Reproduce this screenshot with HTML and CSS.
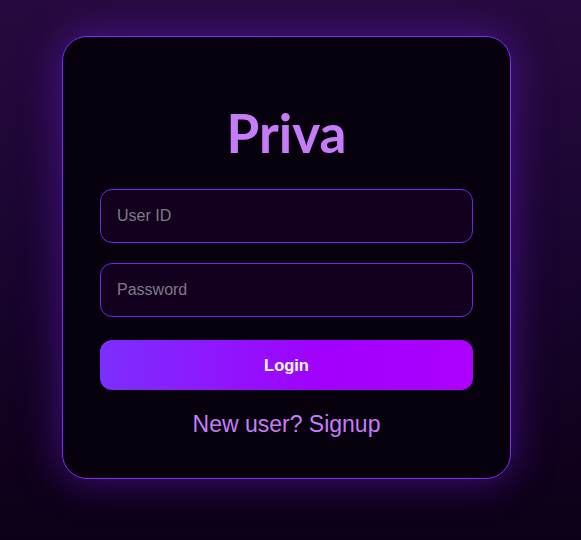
FILE: index.html
```html
<!DOCTYPE html>
<html lang="en">
<head>
<meta charset="utf-8">
<title>Priva</title>
<link rel="stylesheet" href="styles.css">
</head>
<body>
<main class="card">
  <h1 class="brand">Priva</h1>
  <form class="form">
    <input class="field" type="text" placeholder="User ID">
    <input class="field field-pass" type="password" placeholder="Password">
    <button class="btn" type="button">Login</button>
  </form>
  <p class="signup">New user? Signup</p>
</main>
</body>
</html>
```

FILE: styles.css
```css
html, body {
  margin: 0;
  height: 100%;
}
body {
  background: linear-gradient(180deg, #270a3f 0%, #1a0530 45%, #0c0016 100%);
  font-family: "Liberation Sans", Arial, sans-serif;
  overflow: hidden;
}
.card {
  box-sizing: border-box;
  width: 449px;
  height: 443px;
  margin: 36px 0 0 62px;
  padding: 67px 37px 0;
  background: #07000d;
  border: 1px solid #7a2ff5;
  border-radius: 25px;
  box-shadow: 0 0 40px rgba(110, 30, 210, 0.55);
  display: flex;
  flex-direction: column;
  align-items: stretch;
}
.brand {
  margin: 0;
  font-family: Lato, "Open Sans", sans-serif;
  font-weight: 700;
  font-size: 53px;
  line-height: 58px;
  color: #c67cf8;
  text-align: center;
}
.form {
  margin-top: 27px;
  display: flex;
  flex-direction: column;
}
.field {
  box-sizing: border-box;
  height: 54px;
  padding: 0 16px;
  background: #12001e;
  border: 1px solid #6b2ae8;
  border-radius: 12px;
  font-family: "Liberation Sans", Arial, sans-serif;
  font-size: 16px;
  color: #ddd;
  outline: none;
}
.field::placeholder {
  color: #7f7a88;
}
.field-pass {
  margin-top: 20px;
}
.btn {
  margin-top: 23px;
  height: 50px;
  border: none;
  border-radius: 12px;
  background: linear-gradient(90deg, #7b2ffe 0%, #a100fe 60%, #ad00fe 100%);
  color: #fff;
  font-family: "Liberation Sans", Arial, sans-serif;
  font-weight: 700;
  font-size: 16.5px;
}
.signup {
  margin: 21px 0 0;
  text-align: center;
  font-size: 23px;
  color: #c67cf8;
}
```
